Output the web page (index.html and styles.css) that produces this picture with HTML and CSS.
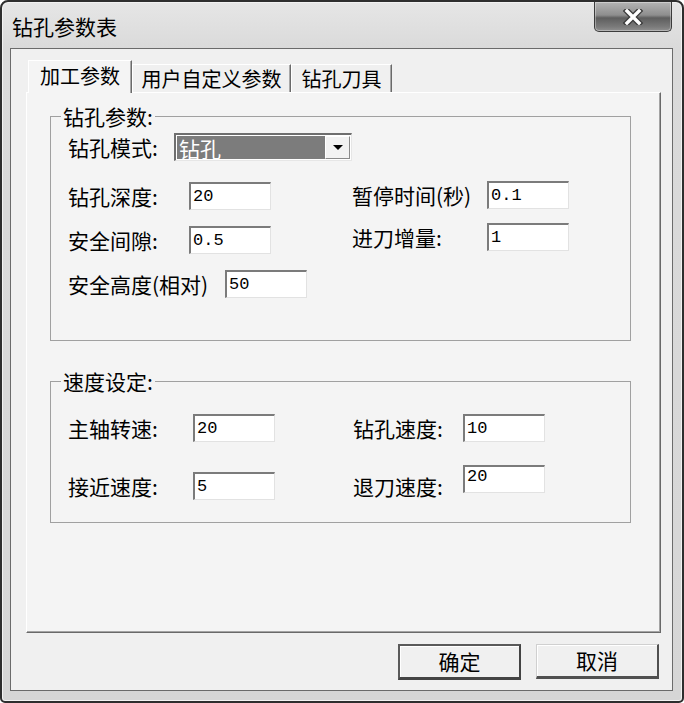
FILE: index.html
```html
<!DOCTYPE html>
<html lang="zh-CN">
<head>
<meta charset="utf-8">
<title>钻孔参数表</title>
<link rel="stylesheet" href="styles.css">
</head>
<body>
<div class="window">
  <div class="titlebar">
    <span class="title">钻孔参数表</span>
    <div class="close">
      <svg width="22" height="16" viewBox="0 0 22 16">
        <path d="M5 2 L17 14 M17 2 L5 14" stroke="#3a3a3a" stroke-width="6" stroke-linecap="square" fill="none"/>
        <path d="M5 2 L17 14 M17 2 L5 14" stroke="#ffffff" stroke-width="3.4" stroke-linecap="square" fill="none"/>
      </svg>
    </div>
  </div>
  <div class="client">
    <div class="tabs">
      <div class="tab tab1 active">加工参数</div>
      <div class="tab tab2">用户自定义参数</div>
      <div class="tab tab3">钻孔刀具</div>
    </div>
    <div class="panel">
      <fieldset class="group g1">
        <legend>钻孔参数:</legend>
        <div class="gbody g1body">
          <div class="mode-row">
            <span class="lbl mode-lbl">钻孔模式:</span>
            <div class="combo">
              <span class="combo-val">钻孔</span>
              <span class="combo-btn">
                <svg width="12" height="7" viewBox="0 0 12 7"><path d="M1 1 L11 1 L6 6 Z" fill="#000"/></svg>
              </span>
            </div>
          </div>
          <div class="cols">
            <div class="col col-left">
              <div class="row">
                <span class="lbl w121">钻孔深度:</span>
                <div class="inp">20</div>
              </div>
              <div class="row">
                <span class="lbl w121">安全间隙:</span>
                <div class="inp">0.5</div>
              </div>
              <div class="row">
                <span class="lbl w157">安全高度(相对)</span>
                <div class="inp">50</div>
              </div>
            </div>
            <div class="col col-right">
              <div class="row">
                <span class="lbl w135">暂停时间(秒)</span>
                <div class="inp">0.1</div>
              </div>
              <div class="row">
                <span class="lbl w135">进刀增量:</span>
                <div class="inp">1</div>
              </div>
            </div>
          </div>
        </div>
      </fieldset>
      <fieldset class="group g2">
        <legend>速度设定:</legend>
        <div class="gbody g2body">
          <div class="srow">
            <div class="pair pair-left">
              <span class="lbl w125">主轴转速:</span>
              <div class="inp">20</div>
            </div>
            <div class="pair">
              <span class="lbl w110">钻孔速度:</span>
              <div class="inp">10</div>
            </div>
          </div>
          <div class="srow">
            <div class="pair pair-left">
              <span class="lbl w125">接近速度:</span>
              <div class="inp">5</div>
            </div>
            <div class="pair">
              <span class="lbl w110">退刀速度:</span>
              <div class="inp raised top">20</div>
            </div>
          </div>
        </div>
      </fieldset>
    </div>
    <div class="buttons">
      <div class="btn default">确定</div>
      <div class="btn">取消</div>
    </div>
  </div>
</div>
</body>
</html>
```

FILE: styles.css
```css
html, body {
  margin: 0;
  padding: 0;
  background: #ffffff;
}

.window {
  width: 684px;
  height: 703px;
  box-sizing: border-box;
  border: 2px solid #2e2e2e;
  border-radius: 8px 8px 5px 5px;
  background: linear-gradient(#e6e6e6, #dadada 46px, #d6d6d6);
  box-shadow: inset 0 0 0 1px #f2f2f2;
  padding: 0 9px 10px 8px;
  display: flex;
  flex-direction: column;
  font-family: "Noto Sans CJK SC", "Noto Sans", sans-serif;
  color: #000;
}

.titlebar {
  height: 46px;
  display: flex;
  justify-content: space-between;
  align-items: center;
  padding-left: 2px;
}

.title {
  font-size: 21px;
  line-height: 24px;
  margin-top: 2px;
}

.close {
  align-self: flex-start;
  width: 78px;
  height: 30px;
  margin-right: 1px;
  box-sizing: border-box;
  border: 1px solid #3c3c3c;
  border-top: none;
  border-radius: 0 0 5px 5px;
  background: linear-gradient(#b4b4b4, #8e8e8e 45%, #5e5e5e 55%, #7a7a7a 85%, #909090);
  box-shadow: inset 0 0 0 1px rgba(255, 255, 255, 0.35);
  display: flex;
  align-items: center;
  justify-content: center;
}

.client {
  flex: 1;
  border: 1px solid #6b6b6b;
  background: #f0f0f0;
  padding: 11px 11px 10px 15px;
  display: flex;
  flex-direction: column;
}

.tabs {
  position: relative;
  z-index: 1;
  display: flex;
  align-items: flex-end;
  height: 32px;
  padding-left: 2px;
}

.tab {
  box-sizing: border-box;
  height: 28px;
  font-size: 20px;
  line-height: 27px;
  text-align: center;
  white-space: nowrap;
  background: #f0f0f0;
  border-top: 1px solid #ffffff;
  border-left: 1px solid #ffffff;
  border-right: 1px solid #6a6a6a;
  box-shadow: inset -1px 0 0 #a8a8a8;
}

.tab1 { width: 104px; }
.tab2 { width: 159px; }
.tab3 { width: 101px; }

.tab.active {
  height: 33px;
  margin-bottom: -1px;
  line-height: 29px;
  background: #f4f4f4;
}

.panel {
  height: 541px;
  box-sizing: border-box;
  background: #f4f4f4;
  border-top: 1px solid #ffffff;
  border-left: 1px solid #ffffff;
  border-right: 1px solid #696969;
  border-bottom: 1px solid #696969;
  box-shadow: inset -1px -1px 0 #a4a4a4;
  padding: 0 29px 0 23px;
}

.group {
  margin: 0;
  padding: 0;
  min-width: 0;
  border: 1px solid #a0a0a0;
}

.group legend {
  margin-left: 10px;
  padding: 0 2px;
  font-size: 21px;
  line-height: 24px;
}

.g1 { margin-top: 11px; }
.g2 { margin-top: 28px; }

.gbody {
  padding-left: 17px;
}

.g1body { padding-bottom: 42px; }
.g2body { padding-top: 21px; padding-bottom: 22px; }

.lbl {
  font-size: 21px;
  line-height: 24px;
  white-space: nowrap;
  flex: none;
}

.mode-lbl { width: 106px; }
.w121 { width: 121px; }
.w157 { width: 157px; }
.w135 { width: 135px; }
.w125 { width: 125px; }
.w110 { width: 110px; }

.mode-row {
  display: flex;
  align-items: center;
  margin-top: 5px;
  height: 28px;
}

.combo {
  width: 178px;
  height: 28px;
  box-sizing: border-box;
  display: flex;
  background: #ffffff;
  border-top: 2px solid #6e6e6e;
  border-left: 2px solid #6e6e6e;
  border-right: 1px solid #e6e6e6;
  border-bottom: 1px solid #e6e6e6;
  padding: 1px;
}

.combo-val {
  flex: 1;
  background: #7c7c7c;
  color: #ffffff;
  font-size: 21px;
  line-height: 24px;
  padding-left: 2px;
}

.combo-btn {
  width: 25px;
  box-sizing: border-box;
  background: #f2f2f2;
  border-top: 1px solid #ffffff;
  border-left: 1px solid #ffffff;
  border-right: 1px solid #8a8a8a;
  border-bottom: 1px solid #8a8a8a;
  display: flex;
  align-items: center;
  justify-content: center;
}

.cols {
  display: flex;
  margin-top: 20px;
}

.col {
  display: flex;
  flex-direction: column;
}

.col-left {
  width: 284px;
  padding-top: 1px;
  gap: 16px;
}

.col-right {
  gap: 14px;
}

.row {
  display: flex;
  align-items: center;
  height: 28px;
}

.srow {
  display: flex;
  align-items: center;
  height: 28px;
}

.srow + .srow {
  margin-top: 30px;
}

.pair {
  display: flex;
  align-items: center;
  height: 28px;
}

.pair-left {
  width: 285px;
}

.inp {
  width: 82px;
  height: 28px;
  box-sizing: border-box;
  background: #ffffff;
  border-top: 2px solid #7b7b7b;
  border-left: 2px solid #7b7b7b;
  border-right: 1px solid #e2e2e2;
  border-bottom: 1px solid #e2e2e2;
  padding-left: 2px;
  font-family: "Liberation Mono", "DejaVu Sans Mono", monospace;
  font-size: 17px;
  line-height: 25px;
  flex: none;
}

.inp.raised {
  align-self: flex-start;
  margin-top: -7px;
}

.inp.top {
  line-height: 19px;
}

.buttons {
  display: flex;
  justify-content: flex-end;
  gap: 15px;
  margin-top: 11px;
  padding-right: 2px;
}

.btn {
  width: 123px;
  height: 35px;
  box-sizing: border-box;
  font-size: 21px;
  line-height: 30px;
  text-align: center;
  background: #f0f0f0;
  border-top: 1px solid #d0d0d0;
  border-left: 1px solid #d0d0d0;
  border-right: 2px solid #505050;
  border-bottom: 3px solid #505050;
  box-shadow: inset 1px 1px 0 #ffffff;
}

.btn.default {
  height: 36px;
  border-top: 2px solid #5a5a5a;
  border-left: 2px solid #5a5a5a;
  border-right: 2px solid #444444;
  border-bottom: 3px solid #444444;
  line-height: 30px;
}
```
